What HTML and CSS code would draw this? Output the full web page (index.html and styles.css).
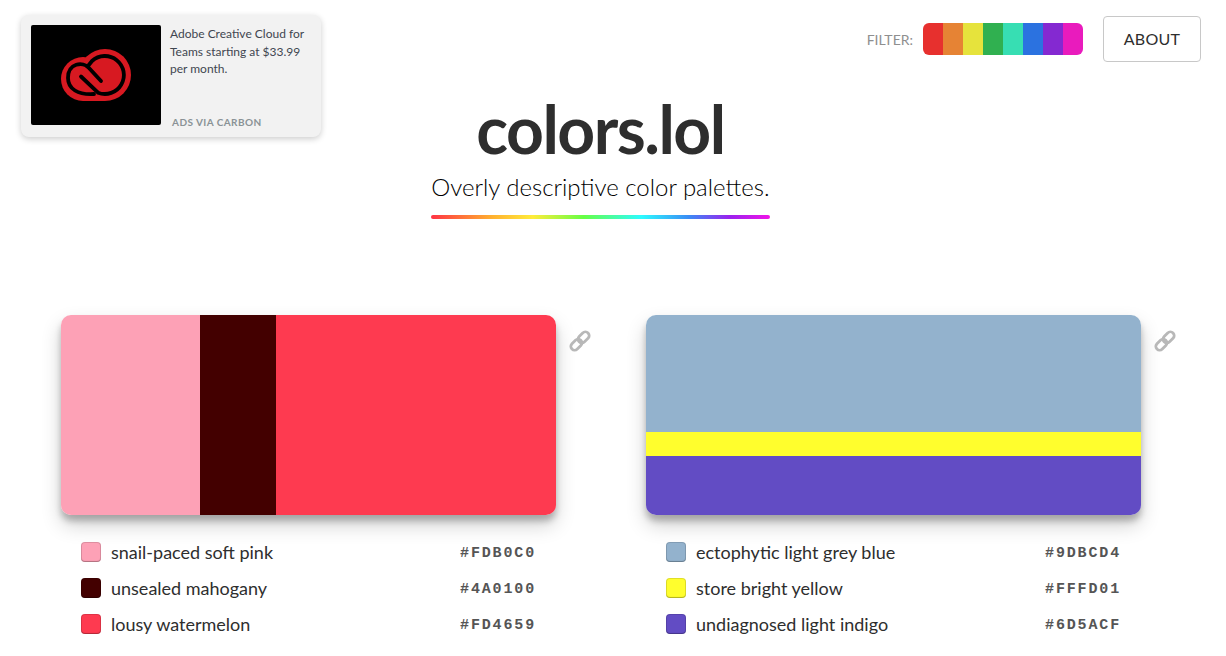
FILE: index.html
```html
<!DOCTYPE html>
<html lang="en">
<head>
<meta charset="utf-8">
<title>colors.lol</title>
<link rel="stylesheet" href="styles.css">
</head>
<body>
<header class="top">
  <a class="ad">
    <span class="ad-image">
      <svg class="ad-logo" viewBox="0 0 130 100" width="130" height="100">
        <rect width="130" height="100" rx="2" fill="#000"/>
        <circle cx="52" cy="54" r="22" fill="#d71921"/>
        <circle cx="74" cy="50" r="26" fill="#d71921"/>
        <rect x="52" y="60" width="22" height="16" fill="#d71921"/>
        <path d="M57 41 L61 36 A19 19 0 1 1 67 67.7 L50 51.5" fill="none" stroke="#000" stroke-width="3.8" stroke-linecap="round" stroke-linejoin="round"/>
        <path d="M70 56 L58 43 C52 36 37 38 37 53 C37 64 47 70 63 69" fill="none" stroke="#000" stroke-width="3.8" stroke-linecap="round"/>
      </svg>
    </span>
    <span class="ad-copy">
      <span class="ad-text">Adobe Creative Cloud for Teams starting at $33.99 per month.</span>
      <span class="ad-via">ADS VIA CARBON</span>
    </span>
  </a>
  <div class="hero">
    <h1>colors.lol</h1>
    <p>Overly descriptive color palettes.</p>
    <div class="rainbow"></div>
  </div>
  <nav class="nav">
    <span class="filter-label">FILTER:</span>
    <div class="filter">
      <span class="f1"></span><span class="f2"></span><span class="f3"></span><span class="f4"></span>
      <span class="f5"></span><span class="f6"></span><span class="f7"></span><span class="f8"></span>
    </div>
    <a class="about">ABOUT</a>
  </nav>
</header>
<main class="palettes">
  <section class="palette">
    <div class="card row">
      <div class="pink" style="flex-basis:28.1%"></div>
      <div class="mahogany" style="flex-basis:15.3%"></div>
      <div class="melon" style="flex-basis:56.6%"></div>
    </div>
    <svg class="link" viewBox="0 0 24 24" width="24" height="24"><g transform="rotate(-45 12 12)" fill="none" stroke="#b8b8b8" stroke-width="2.8"><rect x="0.6" y="8.2" width="12.6" height="7.6" rx="3.8"/><rect x="10.8" y="8.2" width="12.6" height="7.6" rx="3.8"/></g></svg>
    <ul class="names">
      <li><span class="chip pink"></span><span class="name">snail-paced soft pink</span><code>#FDB0C0</code></li>
      <li><span class="chip mahogany"></span><span class="name">unsealed mahogany</span><code>#4A0100</code></li>
      <li><span class="chip melon"></span><span class="name">lousy watermelon</span><code>#FD4659</code></li>
    </ul>
  </section>
  <section class="palette">
    <div class="card column">
      <div class="blue" style="flex-basis:58.5%"></div>
      <div class="yellow" style="flex-basis:12%"></div>
      <div class="indigo" style="flex-basis:29.5%"></div>
    </div>
    <svg class="link" viewBox="0 0 24 24" width="24" height="24"><g transform="rotate(-45 12 12)" fill="none" stroke="#b8b8b8" stroke-width="2.8"><rect x="0.6" y="8.2" width="12.6" height="7.6" rx="3.8"/><rect x="10.8" y="8.2" width="12.6" height="7.6" rx="3.8"/></g></svg>
    <ul class="names">
      <li><span class="chip blue"></span><span class="name">ectophytic light grey blue</span><code>#9DBCD4</code></li>
      <li><span class="chip yellow"></span><span class="name">store bright yellow</span><code>#FFFD01</code></li>
      <li><span class="chip indigo"></span><span class="name">undiagnosed light indigo</span><code>#6D5ACF</code></li>
    </ul>
  </section>
</main>
</body>
</html>
```
FILE: styles.css
```css
* { box-sizing: border-box; }
html, body { height: 656px; overflow: hidden; }
body {
  margin: 0;
  width: 1201px;
  background: #fff;
  color: #2e2e2e;
  font-family: "Lato", "Liberation Sans", sans-serif;
}
.top {
  display: grid;
  grid-template-columns: 1fr auto 1fr;
  align-items: start;
  height: 315px;
}
.ad {
  display: flex;
  gap: 9px;
  width: 300px;
  height: 122px;
  margin: 15px 0 0 21px;
  padding: 10px;
  background: #f2f2f2;
  border-radius: 8px;
  box-shadow: 0 2px 6px rgba(0, 0, 0, .2);
}
.ad-image { display: block; width: 130px; height: 100px; flex: none; }
.ad-logo { display: block; }
.ad-copy { display: flex; flex-direction: column; justify-content: space-between; flex: 1; height: 103px; }
.ad-text { font-size: 12px; line-height: 17.5px; color: #3f4650; }
.ad-via { font-size: 10px; font-weight: 700; letter-spacing: .45px; color: #8a9296; line-height: 12px; margin-left: 2px; }
.hero { display: flex; flex-direction: column; align-items: center; padding-top: 90px; }
.hero h1 {
  margin: 0;
  font-size: 66px;
  line-height: 78px;
  font-weight: 700;
  color: #2e2e2e;
  letter-spacing: -1.5px;
}
.hero p { margin: 2px 0 0; font-size: 24px; line-height: 34px; font-weight: 300; color: #000; }
.rainbow {
  width: 100%;
  height: 4px;
  margin-top: 11px;
  border-radius: 2px;
  background: linear-gradient(90deg, #ff3344, #ffb030 18%, #ffec3a 30%, #66ff44 45%, #2dfbff 62%, #3a8cf5 76%, #9a22ee 88%, #f014e8);
}
.nav { display: flex; justify-content: flex-end; align-items: center; margin-top: 16px; height: 46px; }
.filter-label { font-size: 14px; font-weight: 400; color: #8f8f8f; margin-right: 10px; }
.filter { display: flex; height: 32px; border-radius: 6px; overflow: hidden; margin-right: 20px; }
.filter span { width: 20px; }
.f1 { background: #e7302e; }
.f2 { background: #e68334; }
.f3 { background: #e6e33c; }
.f4 { background: #30b050; }
.f5 { background: #37deb3; }
.f6 { background: #2b72e0; }
.f7 { background: #8429d1; }
.f8 { background: #e91bbd; }
.about {
  display: flex;
  align-items: center;
  justify-content: center;
  width: 98px;
  height: 46px;
  padding-bottom: 2px;
  border: 1px solid #c8c8c8;
  border-radius: 4px;
  font-size: 16px;
  font-weight: 400;
  letter-spacing: .3px;
  color: #2e2e2e;
}
.palettes { display: flex; gap: 90px; padding-left: 61px; }
.palette { position: relative; width: 495px; }
.card {
  display: flex;
  height: 200px;
  border-radius: 10px;
  overflow: hidden;
  box-shadow: 0 10px 20px rgba(0, 0, 0, .19), 0 6px 6px rgba(0, 0, 0, .23);
}
.card.row { flex-direction: row; }
.card.column { flex-direction: column; }
.card div { flex-grow: 0; flex-shrink: 0; }
.pink { background: #fda1b6; }
.mahogany { background: #430000; }
.melon { background: #fe3a50; }
.blue { background: #93b2cd; }
.yellow { background: #fffe2d; }
.indigo { background: #624cc4; }
.link { position: absolute; left: 507px; top: 14px; }
.names { list-style: none; margin: 19px 0 0; padding: 0 20px; }
.names li { display: flex; align-items: center; height: 36px; }
.chip {
  width: 20px;
  height: 20px;
  flex: none;
  border-radius: 4px;
  box-shadow: inset 0 0 0 1px rgba(0, 0, 0, .12), inset 0 -1px 1px rgba(0, 0, 0, .2);
}
.name { flex: 1; margin-left: 10px; font-size: 18px; color: #2e2e2e; }
code {
  padding-top: 4px;
  font-family: "Liberation Mono", monospace;
  font-weight: 700;
  font-size: 15px;
  line-height: 18px;
  letter-spacing: 1.85px;
  color: #555;
}
```
